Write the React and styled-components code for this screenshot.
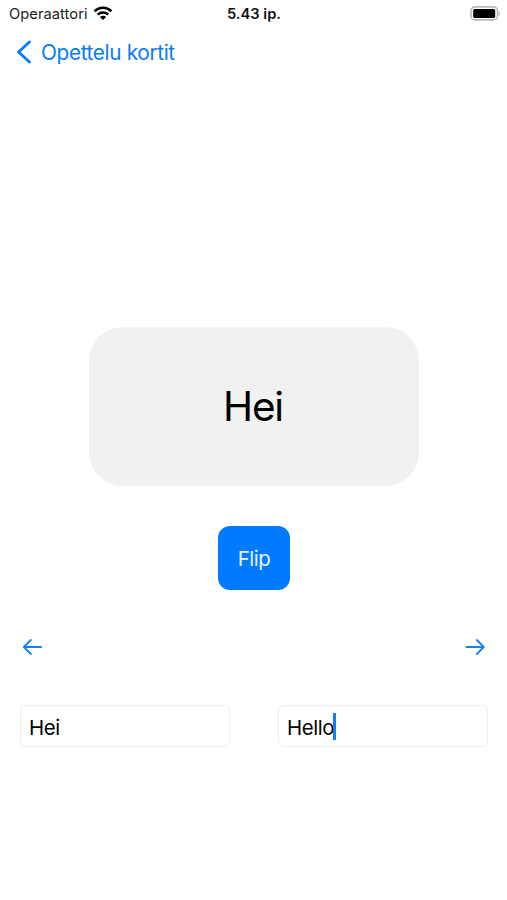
import React from 'react';
import styled, { createGlobalStyle } from 'styled-components';

const GlobalStyle = createGlobalStyle`
  * { box-sizing: border-box; }
  body { margin: 0; background: #fff; }
`;

const Screen = styled.main`
  width: 507px;
  height: 900px;
  display: flex;
  flex-direction: column;
  overflow: hidden;
  background: #fff;
  color: #000;
  font-family: Inter, "Liberation Sans", sans-serif;
`;

const StatusBar = styled.header`
  height: 27px;
  display: grid;
  grid-template-columns: 1fr auto 1fr;
  align-items: center;
  padding: 0 6px 0 9px;
  font-size: 14.7px;
  line-height: 18px;
`;

const Carrier = styled.div`
  display: flex;
  align-items: center;
  gap: 5px;
  color: #222;
  letter-spacing: 0.05px;
`;

const Clock = styled.time`
  margin-left: -2px;
  font-weight: 600;
  color: #111;
`;

const Battery = styled.svg`
  justify-self: end;
`;

const BackLink = styled.button`
  height: 50px;
  align-self: flex-start;
  display: flex;
  align-items: center;
  gap: 9px;
  padding: 0 0 0 16px;
  border: 0;
  background: none;
  color: #087cfb;
  font: inherit;
  font-size: 20.8px;
  letter-spacing: -0.36px;
`;

const Card = styled.section`
  width: 330px;
  height: 159px;
  margin: 250px 0 0 89px;
  padding: 0 2px 1px 0;
  display: flex;
  align-items: center;
  justify-content: center;
  border-radius: 34px;
  background: #f1f1f1;
  font-size: 40.5px;
  letter-spacing: -1.2px;
`;

const FlipButton = styled.button`
  width: 72px;
  height: 64px;
  margin: 40px 0 0 218px;
  padding: 0;
  border: 0;
  border-radius: 12px;
  background: #007aff;
  color: #e8f3ff;
  font: inherit;
  font-size: 20.4px;
  letter-spacing: -0.5px;
`;

const Pager = styled.nav`
  display: flex;
  justify-content: space-between;
  margin-top: 47px;
  padding: 0 22px;
`;

const ArrowButton = styled.button`
  display: flex;
  padding: 0;
  border: 0;
  background: none;
  color: #1581ed;
`;

const Fields = styled.div`
  display: grid;
  grid-template-columns: 210px 210px;
  gap: 48px;
  margin: 48px 0 0 20px;
`;

const Field = styled.div`
  height: 42px;
  display: flex;
  align-items: center;
  padding: 2px 0 0 8px;
  border: 1px solid #ededed;
  border-radius: 6px;
  font-size: 20.4px;
  letter-spacing: -0.4px;
`;

const Caret = styled.span`
  width: 3px;
  height: 27px;
  margin-left: -1px;
  margin-bottom: 2px;
  background: #147cf5;
`;

const WifiIcon = () => (
  <svg width="20" height="15" viewBox="0 0 20 15" fill="none" stroke="#000" strokeWidth="2.6">
    <path d="M1.5 5.2C6.3.6 13.7.6 18.5 5.2" />
    <path d="M4.7 8.6c3-2.8 7.6-2.8 10.6 0" />
    <path d="M10 14 6.9 11c1.8-1.6 4.4-1.6 6.2 0Z" fill="#000" stroke="none" />
  </svg>
);

const BatteryIcon = () => (
  <Battery width="31" height="15" viewBox="0 0 31 15">
    <rect x="1" y=".9" width="26.5" height="13" rx="4" fill="#fff" stroke="#b9b9b9" strokeWidth="1.6" />
    <rect x="3.2" y="3" width="22" height="9" rx="1.5" />
    <path d="M28.5 5.2c2.1.8 2.1 3.8 0 4.6Z" fill="#b9b9b9" />
  </Battery>
);

const Chevron = () => (
  <svg width="16" height="24" viewBox="0 0 16 24" fill="none" stroke="currentColor" strokeWidth="2.9" strokeLinecap="round" strokeLinejoin="round">
    <path d="M13.4 2 2.6 12l10.8 10" />
  </svg>
);

const Arrow = ({ path }) => (
  <svg width="20" height="20" viewBox="0 0 20 20" fill="none" stroke="currentColor" strokeWidth="1.8" strokeLinecap="round" strokeLinejoin="round">
    <path d={path} />
  </svg>
);

export default function App() {
  return (
    <Screen>
      <GlobalStyle />
      <StatusBar>
        <Carrier>Operaattori <WifiIcon /></Carrier>
        <Clock>5.43 ip.</Clock>
        <BatteryIcon />
      </StatusBar>
      <BackLink><Chevron />Opettelu kortit</BackLink>
      <Card>Hei</Card>
      <FlipButton>Flip</FlipButton>
      <Pager>
        <ArrowButton aria-label="Edellinen"><Arrow path="m8.8 3-7 7 7 7M1.8 10h17.4" /></ArrowButton>
        <ArrowButton aria-label="Seuraava"><Arrow path="m11.8 3 7 7-7 7M18.8 10H1.4" /></ArrowButton>
      </Pager>
      <Fields>
        <Field>Hei</Field>
        <Field>Hello<Caret /></Field>
      </Fields>
    </Screen>
  );
}
